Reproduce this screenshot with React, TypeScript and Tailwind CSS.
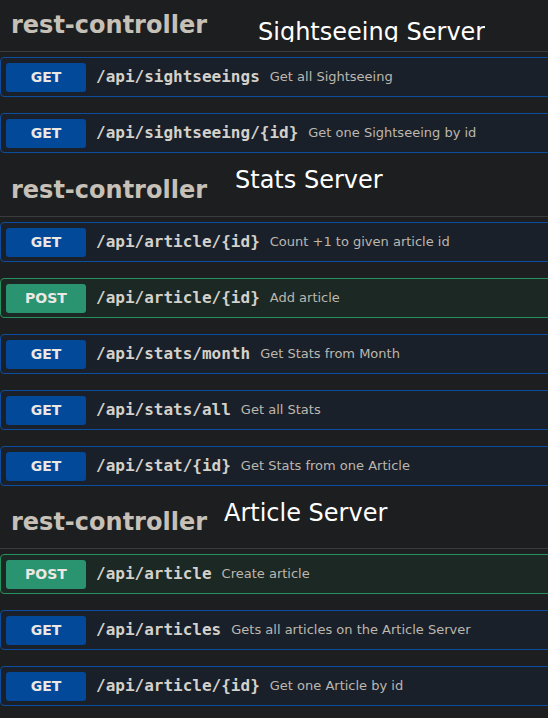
import React from 'react';

type Method = 'GET' | 'POST';

interface Endpoint {
  method: Method;
  path: string;
  summary: string;
}

interface Section {
  title: string;
  endpoints: Endpoint[];
}

const sections: Section[] = [
  {
    title: 'Sightseeing Server',
    endpoints: [
      { method: 'GET', path: '/api/sightseeings', summary: 'Get all Sightseeing' },
      { method: 'GET', path: '/api/sightseeing/{id}', summary: 'Get one Sightseeing by id' },
    ],
  },
  {
    title: 'Stats Server',
    endpoints: [
      { method: 'GET', path: '/api/article/{id}', summary: 'Count +1 to given article id' },
      { method: 'POST', path: '/api/article/{id}', summary: 'Add article' },
      { method: 'GET', path: '/api/stats/month', summary: 'Get Stats from Month' },
      { method: 'GET', path: '/api/stats/all', summary: 'Get all Stats' },
      { method: 'GET', path: '/api/stat/{id}', summary: 'Get Stats from one Article' },
    ],
  },
  {
    title: 'Article Server',
    endpoints: [
      { method: 'POST', path: '/api/article', summary: 'Create article' },
      { method: 'GET', path: '/api/articles', summary: 'Gets all articles on the Article Server' },
      { method: 'GET', path: '/api/article/{id}', summary: 'Get one Article by id' },
    ],
  },
];

const EndpointRow: React.FC<Endpoint> = ({ method, path, summary }) => {
  const isPost = method === 'POST';
  return (
    <div
      className={`flex items-center h-[40px] mb-4 -mr-3 pl-[5px] border rounded-[4px] ${
        isPost ? 'bg-[#1b2823] border-[#27905f]' : 'bg-[#19202a] border-[#0d4d9e]'
      }`}
    >
      <span
        className={`w-[80px] h-[29px] flex items-center justify-center rounded-[3px] text-[14px] font-bold text-[#ebe8e4] ${
          isPost ? 'bg-[#2a9370]' : 'bg-[#03499a]'
        }`}
      >
        {method}
      </span>
      <span className="px-[10px] text-[16px] font-bold text-[#d4d0ca] font-['DejaVu_Sans_Mono',monospace] whitespace-nowrap">
        {path}
      </span>
      <span className="text-[13px] text-[#bdb7ae] whitespace-nowrap">{summary}</span>
    </div>
  );
};

const App: React.FC = () => {
  return (
    <div className="w-[548px] h-[718px] overflow-hidden bg-[#1d1e20] pt-[4px] font-['DejaVu_Sans',sans-serif]">
      {sections.map((section, i) => (
        <section key={section.title}>
          {/* tag header, with the server name pasted over it */}
          <div
            className={`relative flex items-end pl-[11px] pb-[11px] border-b border-[#3a3b3c] mb-[5px] -mr-3 ${
              i === 2 ? 'h-[47px]' : 'h-[48px]'
            }`}
          >
            <h3 className="text-[24px] leading-[30px] font-bold text-[#c6c0b7]">rest-controller</h3>
            {i === 0 && (
              <div className="absolute left-[258px] top-[14px] h-[24px] overflow-hidden">
                <span className="block text-[24px] leading-[28px] text-white whitespace-nowrap">{section.title}</span>
              </div>
            )}
            {i === 1 && (
              <span className="absolute left-[235px] top-[-3px] text-[24px] leading-[28px] text-white whitespace-nowrap">
                {section.title}
              </span>
            )}
            {i === 2 && (
              <span className="absolute left-[224px] top-[-3px] text-[24px] leading-[28px] text-white whitespace-nowrap">
                {section.title}
              </span>
            )}
          </div>
          {section.endpoints.map((ep) => (
            <EndpointRow key={ep.method + ep.path + ep.summary} {...ep} />
          ))}
        </section>
      ))}
    </div>
  );
};

export default App;
